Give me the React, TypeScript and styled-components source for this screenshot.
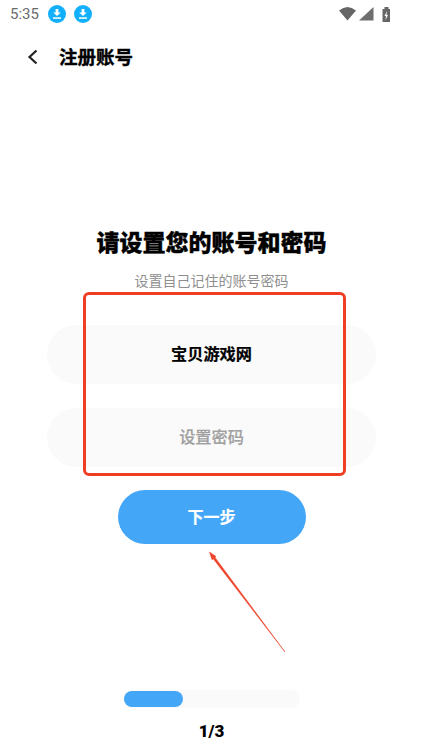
import React from "react";
import styled, { createGlobalStyle } from "styled-components";

const Global = createGlobalStyle`
  html, body { margin: 0; padding: 0; background: #fff; }
  body { font-family: "Noto Sans CJK SC", "Noto Sans", sans-serif; }
`;

const Page = styled.div`
  position: relative;
  width: 423px;
  height: 752px;
  overflow: hidden;
  background: #fff;
  display: flex;
  flex-direction: column;
`;

const StatusBar = styled.div`
  height: 28px;
  padding: 0 33px 0 10px;
  display: flex;
  align-items: center;
  justify-content: space-between;
`;

const StatusGroup = styled.div`
  display: flex;
  align-items: center;
`;

const Time = styled.span`
  font-family: Roboto, sans-serif;
  font-size: 15px;
  color: #6b6b6b;
  width: 38px;
`;

const DownloadBadge = styled.svg`
  width: 18px;
  height: 18px;
  margin-right: 8px;
`;

const Header = styled.div`
  height: 58px;
  padding: 0 0 2px 27px;
  box-sizing: border-box;
  display: flex;
  align-items: center;
  gap: 21px;
`;

const BackIcon = styled.svg`
  margin-top: 2px;
`;

const HeaderTitle = styled.h1`
  margin: 0;
  font-size: 18.500px;
  line-height: 26px;
  font-weight: 700;
  color: #000;
  -webkit-text-stroke: 0.4px #000;
`;

const Main = styled.main`
  padding-top: 139px;
  display: flex;
  flex-direction: column;
  align-items: center;
`;

const Title = styled.h2`
  margin: 0;
  font-size: 23px;
  line-height: 32px;
  font-weight: 900;
  color: #000;
  -webkit-text-stroke: 0.4px #000;
`;

const Subtitle = styled.p`
  margin: 13px 0 0;
  font-size: 14px;
  line-height: 20px;
  color: #8f8f8f;
`;

const Field = styled.div<{ $placeholder?: boolean }>`
  width: 329px;
  height: 59px;
  box-sizing: border-box;
  padding-bottom: 3px;
  border-radius: 30px;
  background: #fafafa;
  display: flex;
  align-items: center;
  justify-content: center;
  font-size: 16.200px;
  font-weight: ${(p) => (p.$placeholder ? 500 : 700)};
  color: ${(p) => (p.$placeholder ? "#a0a0a0" : "#000")};
  -webkit-text-stroke: ${(p) => (p.$placeholder ? "0.2px #a0a0a0" : "0.2px #000")};
`;

const FirstField = styled(Field)`
  margin-top: 35px;
`;

const SecondField = styled(Field)`
  margin-top: 24px;
`;

const NextButton = styled.button`
  margin-top: 23px;
  width: 188px;
  height: 54px;
  border: 0;
  padding: 0 0 3px;
  border-radius: 27px;
  background: #43a6f7;
  color: #fff;
  font-family: inherit;
  font-size: 16px;
  font-weight: 700;
  -webkit-text-stroke: 0.2px #fff;
`;

const Footer = styled.div`
  margin-top: auto;
  padding-bottom: 10px;
  display: flex;
  flex-direction: column;
  align-items: center;
`;

const Track = styled.div`
  width: 176px;
  height: 18px;
  border-radius: 9px;
  background: #fafafa;
  display: flex;
  align-items: center;
`;

const Fill = styled.div`
  height: 16px;
  border-radius: 8px;
  background: #43a6f7;
`;

const StepText = styled.div`
  margin-top: 12px;
  font-family: Roboto, sans-serif;
  font-size: 17px;
  line-height: 22px;
  font-weight: 900;
  color: #000;
`;

const Highlight = styled.div`
  position: absolute;
  left: 83px;
  top: 292px;
  width: 263px;
  height: 184px;
  box-sizing: border-box;
  border: 3.500px solid #ee3f25;
  border-radius: 6px;
  pointer-events: none;
`;

const ArrowMark = styled.svg`
  position: absolute;
  left: 195px;
  top: 540px;
  width: 100px;
  height: 120px;
  pointer-events: none;
`;

const Download = () => (
  <DownloadBadge viewBox="0 0 18 18">
    <circle cx="9" cy="9" r="9" fill="#12b0fb" />
    <path d="M7.600 4h2.800v3.400h2.300L9 11 5.300 7.400h2.300z" fill="#fff" />
    <rect x="5" y="12.300" width="8" height="1.500" fill="#fff" />
  </DownloadBadge>
);

export default function App() {
  return (
    <Page>
      <Global />
      <StatusBar>
        <StatusGroup>
          <Time>5:35</Time>
          <Download />
          <Download />
        </StatusGroup>
        <svg width="51" height="16" viewBox="0 0 51 16">
          <path d="M0 4.500Q8.500 -2.500 17 4.500L8.500 14.500z" fill="#666" />
          <path d="M20 14.500L34.500 1v13.500z" fill="#6e6e6e" />
          <path d="M43.500 3h2V1h4v2h2v13h-8z" fill="#666" />
          <path d="M48 5l-2.500 5h1.500l-.5 4 2.500-5h-1.500z" fill="#fff" />
        </svg>
      </StatusBar>
      <Header>
        <BackIcon width="11" height="16" viewBox="0 0 11 16">
          <path d="M9.500 1.500L2.500 8l7 6.500" fill="none" stroke="#222" strokeWidth="2.200" />
        </BackIcon>
        <HeaderTitle>注册账号</HeaderTitle>
      </Header>
      <Main>
        <Title>请设置您的账号和密码</Title>
        <Subtitle>设置自己记住的账号密码</Subtitle>
        <FirstField>宝贝游戏网</FirstField>
        <SecondField $placeholder>设置密码</SecondField>
        <NextButton>下一步</NextButton>
      </Main>
      <Footer>
        <Track>
          <Fill style={{ width: `${(59 / 176) * 100}%` }} />
        </Track>
        <StepText>1/3</StepText>
      </Footer>
      <Highlight />
      <ArrowMark viewBox="0 0 100 120">
        <path d="M14.500 12L21 16.500 20 17.400 90 112 18.200 18.800 17 19.800z" fill="#ee4328" stroke="#ee4328" strokeWidth="0.500" />
      </ArrowMark>
    </Page>
  );
}
